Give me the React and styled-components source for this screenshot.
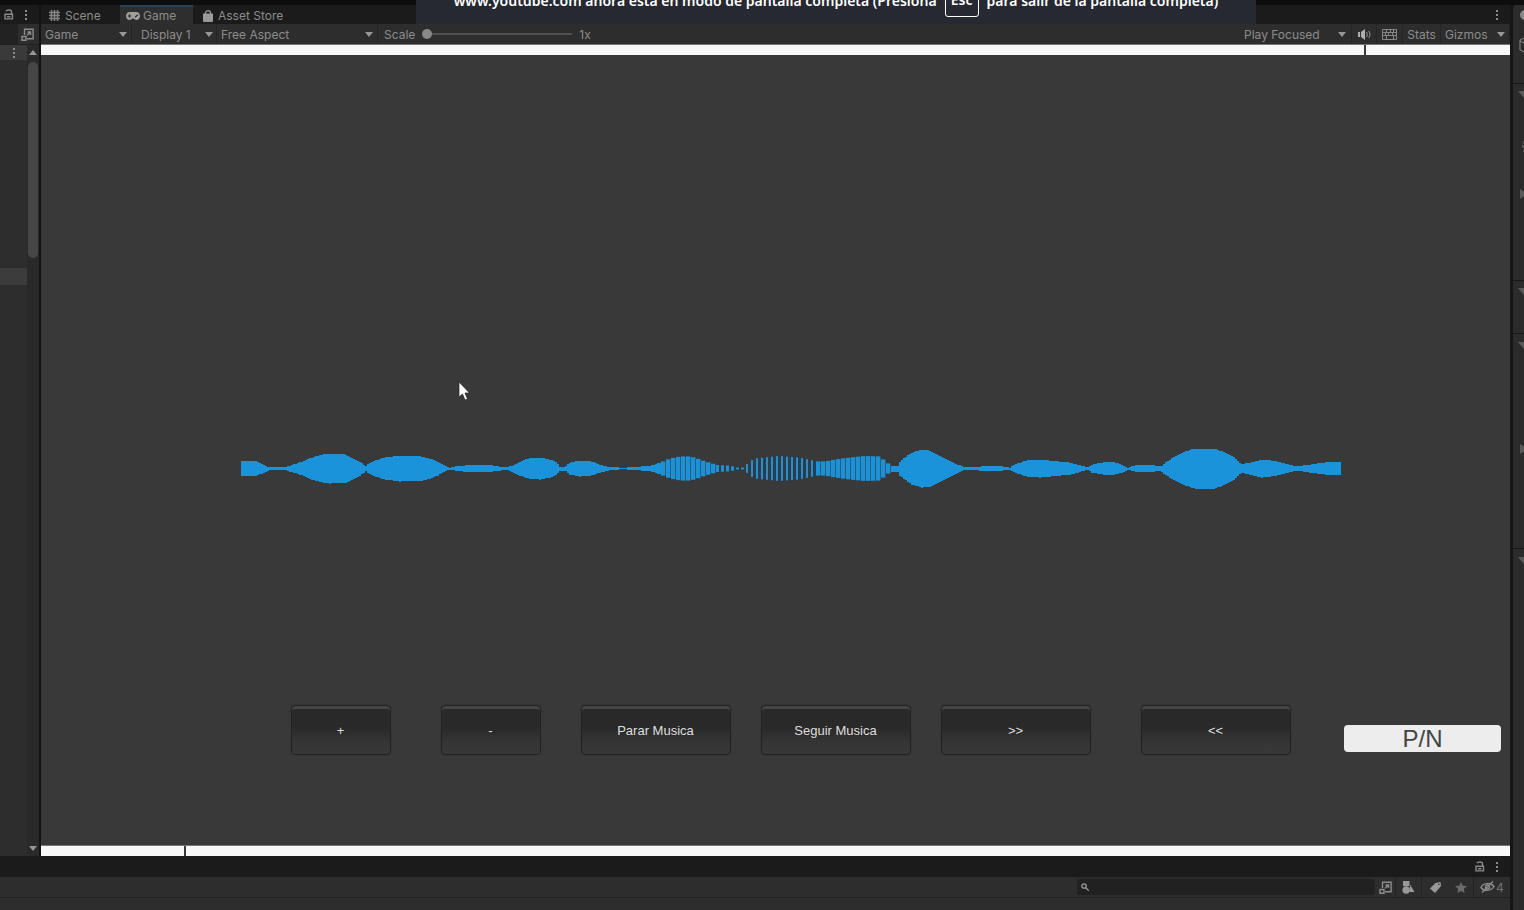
import React from "react";
import styled, { createGlobalStyle } from "styled-components";

const Global = createGlobalStyle`
  * { box-sizing: border-box; }
  body { margin: 0; background: #2d2d2d; font-family: Inter, "Liberation Sans", sans-serif; font-size: 12px; color: #8c8c8c; overflow: hidden; }
  button, select, input { font: inherit; color: inherit; margin: 0; }
`;

const Editor = styled.div`
  position: relative;
  display: flex;
  min-height: 100vh;
  border-top: 5px solid #0d0d0d;
  background: #141414;
`;
const Workspace = styled.div`
  flex: 1;
  min-width: 0;
  display: flex;
  flex-direction: column;
`;
const Upper = styled.div`
  flex: 1;
  display: flex;
  gap: 2px;
`;
const Hierarchy = styled.aside`
  width: 39px;
  display: flex;
  flex-direction: column;
  background: #2d2d2d;
`;
const TabBar = styled.div`
  display: flex;
  align-items: center;
  height: ${(p) => p.$h || 19}px;
  padding: 0 ${(p) => p.$pad || 0}px;
  gap: ${(p) => p.$gap || 0}px;
  background: #1b1b1b;
  justify-content: ${(p) => (p.$end ? "flex-end" : "flex-start")};
`;
const IconButton = styled.button`
  display: flex;
  align-items: center;
  justify-content: center;
  gap: 1px;
  width: ${(p) => p.$w || 10}px;
  height: 100%;
  padding: 0;
  border: 0;
  border-left: ${(p) => (p.$line ? "1px solid #232323" : "0")};
  background: none;
  color: ${(p) => (p.$dim ? "#747474" : "#909090")};
`;
const TreeSearch = styled.div`
  display: flex;
  align-items: center;
  justify-content: flex-end;
  height: 20px;
  padding-right: 5px;
  background: linear-gradient(to right, #222 0 18px, #2d2d2d 18px);
`;
const Tree = styled.div`
  flex: 1;
  display: flex;
  border-top: 1px solid #202020;
`;
const Rows = styled.div`
  flex: 1;
  display: flex;
  flex-direction: column;
  justify-content: flex-start;
  gap: 208px;
`;
const TreeRow = styled.div`
  display: flex;
  justify-content: flex-end;
  height: ${(p) => p.$h}px;
  padding-right: 8px;
  background: ${(p) => p.$bg};
`;
const ScrollTrack = styled.div`
  width: 12px;
  display: flex;
  flex-direction: column;
  align-items: center;
  justify-content: space-between;
  padding: 5px 0;
  background: #292929;
`;
const ScrollTop = styled.div`
  display: flex;
  flex-direction: column;
  align-items: center;
  gap: 7px;
`;
const Thumb = styled.div`
  width: 10px;
  height: 196px;
  border-radius: 5px;
  background: #464646;
`;
const GamePanel = styled.main`
  flex: 1;
  min-width: 0;
  display: flex;
  flex-direction: column;
`;
const Tab = styled.button`
  display: flex;
  align-items: center;
  gap: ${(p) => p.$gap || 3}px;
  height: 19px;
  width: ${(p) => p.$w}px;
  padding: 0 0 0 ${(p) => p.$pad}px;
  border: 0;
  border-top: 2px solid ${(p) => (p.$on ? "#26435a" : "transparent")};
  background: ${(p) => (p.$on ? "#2e2e2e" : "transparent")};
  white-space: nowrap;
`;
const Fill = styled.div`flex: 1;`;
const Toolbar = styled.div`
  display: flex;
  align-items: stretch;
  height: 20px;
  background: #2d2d2d;
`;
const DropBox = styled.label`
  position: relative;
  display: flex;
  width: ${(p) => p.$w}px;
  border-right: 1px solid #242424;
  svg { position: absolute; right: ${(p) => p.$arrow || 4}px; top: 8px; pointer-events: none; }
`;
const Select = styled.select`
  appearance: none;
  width: 100%;
  border: 0;
  padding: 0 0 0 ${(p) => p.$pad || 4}px;
  background: transparent;
  outline: 0;
`;
const ScaleField = styled.label`
  display: flex;
  align-items: center;
  gap: 7px;
  padding-left: 6px;
`;
const Range = styled.input`
  appearance: none;
  width: 150px;
  height: 12px;
  background: linear-gradient(#505050, #505050) center / 100% 2px no-repeat;
  &::-webkit-slider-thumb { appearance: none; width: 10px; height: 10px; border-radius: 50%; background: #888; }
`;
const TextButton = styled.button`
  width: 39px;
  padding: 0;
  border: 0;
  border-left: 1px solid #242424;
  border-right: 1px solid #242424;
  background: none;
`;
const Stage = styled.section`
  position: relative;
  flex: 1;
  display: flex;
  flex-direction: column;
  background: #393939;
`;
const Strip = styled.div`
  display: flex;
  gap: 2px;
  height: 11px;
  border-top: 1px solid #777;
`;
const Segment = styled.div`
  flex: ${(p) => (p.$w ? `0 0 ${p.$w}px` : "1")};
  background: #f8f8f8;
`;
const WaveArea = styled.div`
  flex: 1;
  display: flex;
  align-items: center;
  padding: 176px 169px 0 200px;
`;
const Wave = styled.svg`
  display: block;
  width: 100%;
  height: 44px;
`;
const Controls = styled.div`
  display: flex;
  align-items: center;
  padding: 0 9px 90px 250px;
`;
const PlayerButton = styled.button`
  width: ${(p) => p.$w}px;
  height: 50px;
  margin-right: ${(p) => p.$after}px;
  padding: 0 1px 0 0;
  border: 1px solid #222;
  border-radius: 4px;
  background: linear-gradient(#292929 0, #292929 45%, #353535 75%, #383838);
  box-shadow: inset 0 3px 0 #454545, 0 0 1px #252525;
  color: #dedede;
  font-family: "Liberation Sans", Arial, sans-serif;
  font-size: 13px;
  white-space: nowrap;
`;
const ModeButton = styled.button`
  width: 157px;
  height: 27px;
  margin: 16px 0 0 auto;
  padding: 0;
  border: 0;
  border-radius: 4px;
  background: #ededed;
  color: #444;
  font-family: "Liberation Sans", Arial, sans-serif;
  font-size: 24px;
  line-height: 27px;
`;
const Cursor = styled.svg`
  position: absolute;
  left: 417px;
  top: 337px;
`;
const Project = styled.section`
  height: 54px;
  background: #2d2d2d;
`;
const ProjectTools = styled.div`
  display: flex;
  justify-content: flex-end;
  align-items: center;
  height: 21px;
  border-bottom: 1px solid #222;
`;
const SearchBox = styled.label`
  display: flex;
  align-items: center;
  width: 298px;
  height: 16px;
  padding-left: 4px;
  border-radius: 3px;
  background: #212121;
`;
const SearchInput = styled.input`
  flex: 1;
  min-width: 0;
  height: 14px;
  border: 0;
  outline: 0;
  background: transparent;
`;
const Inspector = styled.aside`
  width: 14px;
  display: flex;
  flex-direction: column;
  overflow: hidden;
  border-left: 3px solid #161616;
  border-top-left-radius: 5px;
  background: #2b2b2b;
`;
const Component = styled.div`
  height: ${(p) => (p.$h ? `${p.$h}px` : "auto")};
  flex: ${(p) => (p.$h ? "none" : "1")};
  border-bottom: ${(p) => (p.$h ? "1px solid #171717" : "0")};
  display: flex;
  flex-direction: column;
  align-items: flex-end;
  gap: ${(p) => p.$gap || 0}px;
  padding-top: ${(p) => p.$top}px;
  svg { flex: none; }
`;
const Toast = styled.div`
  position: absolute;
  top: -27px;
  left: 416px;
  display: flex;
  align-items: center;
  justify-content: center;
  gap: 8px;
  width: 840px;
  height: 46px;
  padding-bottom: 2px;
  background: #262931;
  color: #fff;
  font-family: "Noto Sans", sans-serif;
  font-size: 14px;
  font-weight: 600;
  white-space: nowrap;
`;
const Key = styled.kbd`
  width: 34px;
  height: 34px;
  border: 1px solid #fff;
  border-radius: 3px;
  font: inherit;
  line-height: 32px;
  text-align: center;
`;

const Caret = () => (
  <svg width="8" height="5" viewBox="0 0 8 5"><path d="M0 0h8L4 5z" fill="#969696" /></svg>
);
const Fold = ({ right }) => (
  <svg width="6" height="10" viewBox="0 0 6 10"><path d={right ? "M2 0v10l7-5z" : "M0 2h12L6 9z"} fill="#595959" /></svg>
);
const Lock = () => (
  <svg width="10" height="11" viewBox="0 0 10 11" fill="none" stroke="#888" strokeWidth="1.4"><path d="M1 5.2h7.500v4.700H1zM2 2.300C2.500.6 7.500.4 7.500 2.600v2.600M3 7.700h3.500" /></svg>
);
const Kebab = () => (
  <svg width="4" height="12" viewBox="0 0 4 12" fill="#8c8c8c"><path d="M1 1h2v2H1zM1 5h2v2H1zM1 9h2v2H1z" /></svg>
);
const Picker = () => (
  <svg width="13" height="13" viewBox="0 0 13 13" fill="none" stroke="#8c8c8c" strokeWidth="1.4"><path d="M3.500 7V1.200h8.600v9.600H6M1 8.500h4v3.800H1zM6 7.200 9.300 4M6.500 4h3v3" /></svg>
);
const SceneIcon = () => (
  <svg width="11" height="11" viewBox="0 0 11 11" stroke="#858585" strokeWidth="1.500"><path d="M2.500 0v11M5.500 0v11M8.500 0v11M0 2.500h11M0 5.500h11M0 8.500h11" /></svg>
);
const PadIcon = () => (
  <svg width="14" height="8" viewBox="0 0 14 8"><path d="M3.500 0C1.500 0 0 1.700 0 4s1.500 4 3.300 4C5 8 5.700 6.500 7 6.500s2 1.500 3.700 1.500S14 6.300 14 4s-1.500-4-3.500-4z" fill="#a0a0a0" /><path d="M1.700 4h3.600M3.500 2.200v3.600M9 5.200l3-2.500" stroke="#2e2e2e" strokeWidth="1.200" /></svg>
);
const BagIcon = () => (
  <svg width="10" height="12" viewBox="0 0 10 12"><path d="M0 3.500h10V11a1 1 0 0 1-1 1H1a1 1 0 0 1-1-1z" fill="#999" /><path d="M2.500 5V3a2.500 2.300 0 0 1 5 0v2" fill="none" stroke="#999" strokeWidth="1.300" /></svg>
);
const Speaker = () => (
  <svg width="13" height="11" viewBox="0 0 13 11"><path d="M0 3h2v5H0zM3 3l4-3v11L3 8z" fill="#b0b0b0" /><path d="M8.500 3c1 1.500 1 3.500 0 5M10.500 2c2 2 2 5 0 7" fill="none" stroke="#999" /></svg>
);
const Keyboard = () => (
  <svg width="15" height="11" viewBox="0 0 15 11" fill="none" stroke="#888"><path d="M.5.5h14v10H.5zM0 3.500h15M0 6.500h15M4.500 0v3.500M8.500 0v3.500M11.500 0v3.500M3.500 3.500v3M6.500 3.500v3M10.500 3.500v3M4.500 6.500v4M11.500 6.500v4" /></svg>
);
const Magnifier = () => (
  <svg width="8" height="8" viewBox="0 0 8 8" fill="none" stroke="#999" strokeWidth="1.300"><circle cx="3" cy="3" r="2.200" /><path d="m4.700 4.700 3 3" /></svg>
);
const Shapes = () => (
  <svg width="13" height="13" viewBox="0 0 13 13" fill="#999"><path d="M1 0h6.500v5H1zM8 3.500 12.500 11H8z" /><circle cx="4.200" cy="9" r="3.800" /></svg>
);
const TagIcon = () => (
  <svg width="11" height="11" viewBox="0 0 11 11"><path d="M5.500 1 10.500 0 11 4 5 11 0 6.500z" fill="#999" /><circle cx="8.800" cy="2.300" r=".8" fill="#2d2d2d" /></svg>
);
const Star = () => (
  <svg width="12" height="11" viewBox="0 0 12 11"><path d="m6 0 1.700 3.700 4.300.4-3.200 2.700.9 4.200L6 8.900 2.300 11l.9-4.200L0 4.100l4.300-.4z" fill="#6c6c6c" /></svg>
);
const Hidden = () => (
  <svg width="15" height="12" viewBox="0 0 15 12" fill="none" stroke="#8c8c8c" strokeWidth="1.400"><path d="M1 6.500C3 2 10 1 14 5.500 11 10.500 4 10.500 1 6.500zM2 11.500 13 .5" /><circle cx="7.500" cy="6" r="2" /></svg>
);

const ENVELOPE = [
  [241,8],[255,7.5],[262,5],[268,2],[273,1.5],[283,1],[290,3],[303,7],[312,11],[320,13.5],[330,15],[345,14.5],[352,11],[360,7],[366,2.5],[369,5],[375,8],[385,11],[400,13],[420,12.5],[430,10],[438,7],[445,3],[450,1],[458,2.5],[470,3.5],[490,3.5],[500,2],[505,1],[512,3],[520,7],[530,10.5],[540,11],[550,9],[557,6],[560,2],[565,2],[570,6],[580,8],[590,7.5],[600,4],[608,2],[622,0.7],[635,1.5],[648,2.5],[655,4],[663,7],[670,10],[680,12],[690,12],[697,10],[705,7],[712,5],[718,3.5],[728,3],[734,2],[738,1],[741,0],[745,2],[750,6],[755,10],[765,11],[780,12.5],[800,11],[810,9],[817,7],[825,7],[835,9],[850,11],[865,12.5],[878,12],[883,9],[888,5],[890,3],[898,3],[900,7],[905,11],[912,16],[922,19],[930,18],[940,13],[950,8],[958,4],[965,1.5],[975,1],[980,2],[993,3],[1003,2],[1010,1],[1017,5],[1027,8],[1040,9],[1055,7.5],[1070,6],[1080,3.5],[1087,1],[1092,4],[1105,6.5],[1115,6],[1122,4],[1128,1],[1135,3],[1145,4],[1155,3],[1161,2],[1165,6],[1175,12],[1185,17],[1195,20],[1215,20],[1225,16],[1235,11],[1241,4],[1250,6],[1262,9],[1275,7.5],[1285,5],[1297,2],[1310,4],[1325,6],[1341,7],
].map(([x, h]) => [x - 241, h]);

function heightAt(x) {
  const i = Math.max(1, ENVELOPE.findIndex((p) => p[0] >= x));
  const [x0, h0] = ENVELOPE[i - 1];
  const [x1, h1] = ENVELOPE[i];
  return h0 + ((h1 - h0) * (x - x0)) / (x1 - x0);
}
function barWidth(x) {
  if (x >= 420 && x < 475) return 4;
  if (x >= 475 && x < 505) return 3;
  if (x >= 505 && x < 575) return 2;
  if (x >= 575 && x < 650) return 4;
  return 5;
}
const bars = Array.from({ length: 220 }, (_, i) => {
  const x = i * 5;
  return { x, w: barWidth(x), h: heightAt(x + 2) };
});
const solid = Array.from({ length: 550 }, (_, i) => ({ x: i * 2, h: heightAt(i * 2 + 1) })).filter(
  (b) => barWidth(b.x) === 5
);

const Waveform = () => (
  <Wave viewBox="0 0 1100 44" preserveAspectRatio="none" role="img">
    {bars.filter((b) => b.w < 5).map((b) => (
      <g key={b.x}>
        {(b.x < 475 || b.x >= 505) && <rect x={b.x} y={22.5 - b.h} width="5" height={b.h * 2} fill={b.w === 2 ? "#263e4f" : "#2a5c7c"} />}
        <rect x={b.x} y={22.5 - b.h} width={b.w} height={b.h * 2} fill={b.w === 2 ? "#318bc3" : "#1d91d6"} />
      </g>
    ))}
    {solid.map((b) => (
      <rect key={b.x} x={b.x} y={22.5 - b.h} width="2" height={b.h * 2} fill="#1b93da" shapeRendering="crispEdges" />
    ))}
  </Wave>
);

const Drop = ({ label, w, pad, arrow, name }) => (
  <DropBox $w={w} $arrow={arrow}>
    <Select $pad={pad} aria-label={name}><option>{label}</option></Select>
    <Caret />
  </DropBox>
);

const PLAYER = [
  ["+", 100, 50], ["-", 100, 40], ["Parar Musica", 150, 30],
  ["Seguir Musica", 150, 30], [">>", 150, 50], ["<<", 150, 0],
];

export default function App() {
  return (
    <>
      <Global />
      <Editor>
        <Workspace>
          <Upper>
            <Hierarchy>
              <TabBar $pad={4} $gap={7}>
                <IconButton aria-label="Lock"><Lock /></IconButton>
                <IconButton aria-label="Menu"><Kebab /></IconButton>
              </TabBar>
              <TreeSearch><Picker /></TreeSearch>
              <Tree>
                <Rows>
                  <TreeRow $h={15} $bg="#3a3a3a"><IconButton aria-label="Scene menu"><Kebab /></IconButton></TreeRow>
                  <TreeRow $h={17} $bg="#3c3c3c" />
                </Rows>
                <ScrollTrack>
                  <ScrollTop>
                    <svg width="8" height="5" viewBox="0 0 8 5"><path d="M0 5h8L4 0z" fill="#969696" /></svg>
                    <Thumb />
                  </ScrollTop>
                  <Caret />
                </ScrollTrack>
              </Tree>
            </Hierarchy>
            <GamePanel>
              <TabBar>
                <Tab $w={79} $pad={8} $gap={5}><SceneIcon />Scene</Tab>
                <Tab $w={73} $pad={6} $on><PadIcon />Game</Tab>
                <Tab $w={100} $pad={10} $gap={5}><BagIcon />Asset Store</Tab>
                <Fill />
                <IconButton $w={26} aria-label="Game menu"><Kebab /></IconButton>
              </TabBar>
              <Toolbar>
                <Drop label="Game" w={91} name="View" />
                <Drop label="Display 1" w={85} pad={9} arrow={3} name="Display" />
                <Drop label="Free Aspect" w={161} name="Aspect" />
                <ScaleField>Scale<Range type="range" min="1" max="5" defaultValue="1" />1x</ScaleField>
                <Fill />
                <Drop label="Play Focused" w={112} arrow={5} name="Play mode" />
                <IconButton $w={24} aria-label="Mute"><Speaker /></IconButton>
                <IconButton $w={26} $line aria-label="Shortcuts"><Keyboard /></IconButton>
                <TextButton>Stats</TextButton>
                <Drop label="Gizmos" w={69} name="Gizmos" />
              </Toolbar>
              <Stage>
                <Strip><Segment /><Segment $w={144} /></Strip>
                <WaveArea><Waveform /></WaveArea>
                <Controls>
                  {PLAYER.map(([t, w, after]) => (
                    <PlayerButton key={t} $w={w} $after={after}>{t}</PlayerButton>
                  ))}
                  <ModeButton>P/N</ModeButton>
                </Controls>
                <Strip><Segment $w={143} /><Segment /></Strip>
                <Cursor width="12" height="20" viewBox="0 0 12 20"><path d="M1 1v15l3.500-3 2.500 6 2.500-1L7 12h4.500z" fill="#fff" stroke="#222" strokeWidth=".7" /></Cursor>
              </Stage>
            </GamePanel>
          </Upper>
          <Project>
            <TabBar $h={21} $pad={8} $gap={7} $end>
              <IconButton aria-label="Lock project"><Lock /></IconButton>
              <IconButton aria-label="Project menu"><Kebab /></IconButton>
            </TabBar>
            <ProjectTools>
              <SearchBox><Magnifier /><SearchInput aria-label="Search" /></SearchBox>
              <IconButton $w={20} aria-label="Pick"><Picker /></IconButton>
              <IconButton $w={26} $line aria-label="Types"><Shapes /></IconButton>
              <IconButton $w={27} $line aria-label="Labels"><TagIcon /></IconButton>
              <IconButton $w={25} aria-label="Favorites"><Star /></IconButton>
              <IconButton $w={37} $line $dim aria-label="Hidden items"><Hidden />4</IconButton>
            </ProjectTools>
          </Project>
        </Workspace>
        <Inspector>
          <Component $h={79} $top={4} $gap={16}>
            <svg width="4" height="12" viewBox="0 0 4 12"><circle cx="5" cy="6" r="5" fill="#888" /></svg>
            <svg width="5" height="16" viewBox="0 0 5 16" fill="none" stroke="#888"><path d="M5 1 1 3v10l4 2M1 4l4 2" /></svg>
          </Component>
          <Component $h={197} $top={5} $gap={37}>
            <Fold />
            <svg width="2" height="16" viewBox="0 0 2 16" fill="#555"><path d="M1 5h1v3H1zM0 9h2v3H0zM1 14h1v2H1z" /></svg>
            <Fold right />
          </Component>
          <Component $h={53} $top={5}><Fold /></Component>
          <Component $h={215} $top={6} $gap={94}><Fold /><Fold right /></Component>
          <Component $top={6}><Fold /></Component>
        </Inspector>
        <Toast role="status">
          <span>www.youtube.com ahora está en modo de pantalla completa (Presiona</span>
          <Key>Esc</Key>
          <span>para salir de la pantalla completa)</span>
        </Toast>
      </Editor>
    </>
  );
}
